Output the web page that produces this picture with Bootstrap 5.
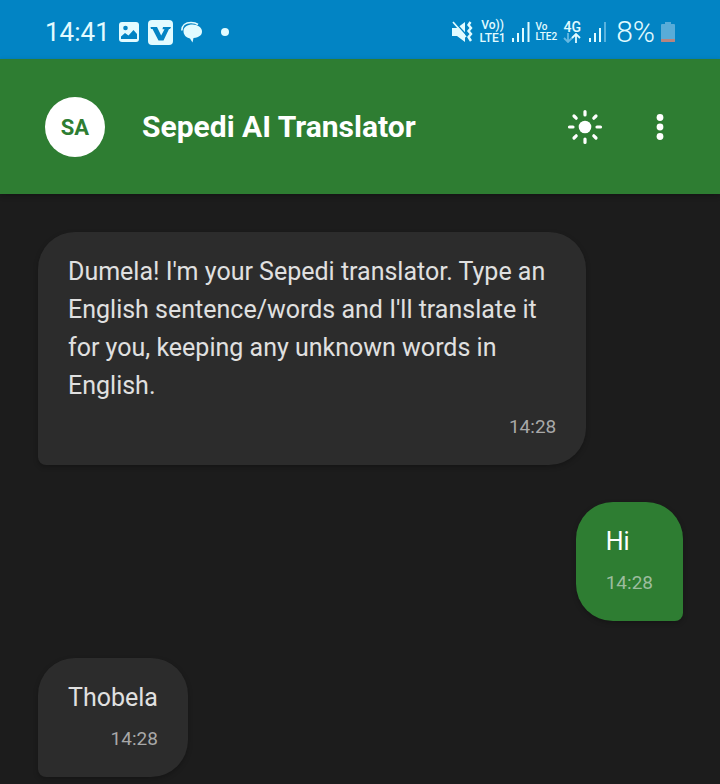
<!DOCTYPE html>
<html lang="en" data-bs-theme="dark">
<head>
<meta charset="utf-8">
<meta name="viewport" content="width=device-width, initial-scale=1">
<title>Sepedi AI Translator</title>
<link href="https://cdn.jsdelivr.net/npm/bootstrap@5.3.0/dist/css/bootstrap.min.css" rel="stylesheet">
<style>
body { background: #1c1c1c; font-family: Roboto, "Liberation Sans", sans-serif; color: #e0e0e0; }
svg { display: block; flex: none; }
.status { background: #0284c4; color: #e2fbff; padding: 5px 45px 0 45px; min-height: 59px; }
.clock { font-size: 26px; line-height: 32px; font-weight: 400; }
.charge { font-size: 30px; line-height: 32px; font-weight: 300; }
.notices { gap: 8px; }
.signals { gap: 6px; }
.tag { font-size: 12px; line-height: 13px; font-weight: 500; text-align: center; }
.tag-sm { font-size: 10px; line-height: 10px; font-weight: 500; }
.tag-net { font-size: 14px; line-height: 12px; font-weight: 500; }
.app-head { background: #2e7d32; padding: 38px 35px 37px 45px; box-shadow: 0 2px 5px rgba(0,0,0,.25); }
.avatar { width: 60px; height: 60px; background: #fff; color: #2e7d32; font-size: 22px; font-weight: 700; }
.app-title { font-size: 30px; line-height: 36px; font-weight: 700; color: #fff; margin-left: 37px; }
.tools { gap: 25px; }
.tool { border: 0; padding: 0; background: transparent; color: #fff; }
.chat { padding: 38px 37px 38px 38px; gap: 37px; }
.bubble { max-width: 85%; padding: 21px 30px 24px; background: #2c2c2c; border-radius: 37px 37px 37px 8px; box-shadow: 0 2px 5px rgba(0,0,0,.25); }
.bubble p { font-size: 25px; line-height: 38px; }
.bubble time { display: block; margin-top: 8px; font-size: 19px; line-height: 28px; text-align: right; color: #a8a8a8; }
.bubble.mine { background: #2e7d32; color: #fff; border-radius: 37px 37px 8px 37px; }
.bubble.mine time { color: #9cbc9e; }
</style>
<script src="https://cdn.jsdelivr.net/npm/bootstrap@5.3.0/dist/js/bootstrap.bundle.min.js"></script>
</head>
<body>
<div class="status d-flex align-items-center justify-content-between">
  <div class="notices d-flex align-items-center">
    <span class="clock">14:41</span>
    <svg width="22" height="22" viewBox="0 0 22 22"><rect x="1" y="1" width="20" height="20" rx="3" fill="#e2fbff"/><circle cx="7.500" cy="7" r="2.300" fill="#0284c4"/><path d="M3 15.500l4-3.500 3.500 2.500 5-5.500 3.500 4v5H3z" fill="#0284c4"/></svg>
    <svg width="25" height="25" viewBox="0 0 25 25"><rect width="25" height="25" rx="4" fill="#e2fbff"/><path d="M2.500 7H9l4.200 8.500L16.500 9.200h-2L15 7h8l-1 2h-1l-5.500 11.500h-5L4.500 9H3z" fill="#0284c4"/></svg>
    <svg width="22" height="22" viewBox="0 0 22 22"><path d="M0.800 9.500C.8 4.500 4.500 1.500 10 1.500c3 0 5 .5 7 2" fill="none" stroke="#e2fbff" stroke-width="1.600"/><path d="M2.500 10C2.500 6 6.500 3.500 11.500 3.500S21 6.500 21 10.500c0 3.500-2.500 5.800-8.500 6.500L11.500 21.500 9 17.500C5 16.500 2.500 14 2.500 10z" fill="#e2fbff"/></svg>
    <svg width="28" height="10" viewBox="0 0 28 10"><circle cx="14" cy="5" r="4" fill="#e2fbff"/></svg>
  </div>
  <div class="signals d-flex align-items-center">
    <svg width="22" height="22" viewBox="0 0 22 22"><path d="M0 7h5l8-6v20l-8-6H0z" fill="#e2fbff"/><path d="M2.500 1l12 13" stroke="#0284c4" stroke-width="1.600"/><path d="M1 1l13 15" stroke="#e2fbff" stroke-width="1.700"/><path d="M18.500 1l-2 3 2.500 3-2.500 3 2.500 3-2.500 3 2.500 4" fill="none" stroke="#e2fbff" stroke-width="2.400"/></svg>
    <span class="tag">Vo))<br>LTE1</span>
    <svg width="18" height="20" viewBox="0 0 18 20" fill="#e2fbff"><path d="M0 16h2v4H0zM5 11h2v9H5zM10 6h2v14h-2zM15.500 0h2v20h-2z"/></svg>
    <span class="tag-sm">Vo<br>LTE2</span>
    <span class="d-flex flex-column align-items-center"><span class="tag-net">4G</span>
      <svg width="18" height="10" viewBox="0 0 18 10" fill="none" stroke-width="1.800"><path d="M5 0v9M1 5l4 4 4-4" stroke="#65b8e2"/><path d="M13 10V1M9 5l4-4 4 4" stroke="#e2fbff"/></svg></span>
    <svg width="23" height="20" viewBox="0 0 23 20" fill="#e2fbff"><path d="M2 16h2v4H2zM7 11h2v9H7zM12 6h2v14h-2z"/><path d="M17 0h2v20h-2z" fill="#58b2de"/></svg>
    <span class="charge">8%</span>
    <svg width="14" height="20" viewBox="0 0 14 20"><path d="M4 0h6v2h3q1 0 1 1v16q0 1-1 1H1q-1 0-1-1V3q0-1 1-1h3z" fill="#59acd8"/><path d="M0 17h14v2q0 1-1 1H1q-1 0-1-1z" fill="#b9847e"/></svg>
  </div>
</div>
<header class="app-head d-flex align-items-center position-relative">
  <div class="avatar rounded-circle d-flex align-items-center justify-content-center">SA</div>
  <h1 class="app-title mb-0">Sepedi AI Translator</h1>
  <div class="tools d-flex ms-auto">
    <button class="tool" type="button" aria-label="Toggle theme"><svg width="50" height="50" viewBox="-25 -25 50 50"><circle r="6.300" fill="currentColor"/><path d="M0-12v-3.500M0 12v3.500M-12 0h-3.500M12 0h3.500M-8.800-8.800l-2.200-2.200M8.800-8.800l2.200-2.200M-8.800 8.800l-2.200 2.200M8.800 8.800l2.200 2.200" stroke="currentColor" stroke-width="3.200" stroke-linecap="round"/></svg></button>
    <button class="tool" type="button" aria-label="More options"><svg width="50" height="50" viewBox="-25 -25 50 50" fill="currentColor"><circle cy="-9.500" r="3.400"/><circle r="3.400"/><circle cy="9.500" r="3.400"/></svg></button>
  </div>
</header>
<main class="chat d-flex flex-column">
  <article class="bubble align-self-start"><p class="mb-0">Dumela! I'm your Sepedi translator. Type an English sentence/words and I'll translate it for you, keeping any unknown words in English.</p><time>14:28</time></article>
  <article class="bubble mine align-self-end"><p class="mb-0">Hi</p><time>14:28</time></article>
  <article class="bubble align-self-start"><p class="mb-0">Thobela</p><time>14:28</time></article>
</main>
</body>
</html>
